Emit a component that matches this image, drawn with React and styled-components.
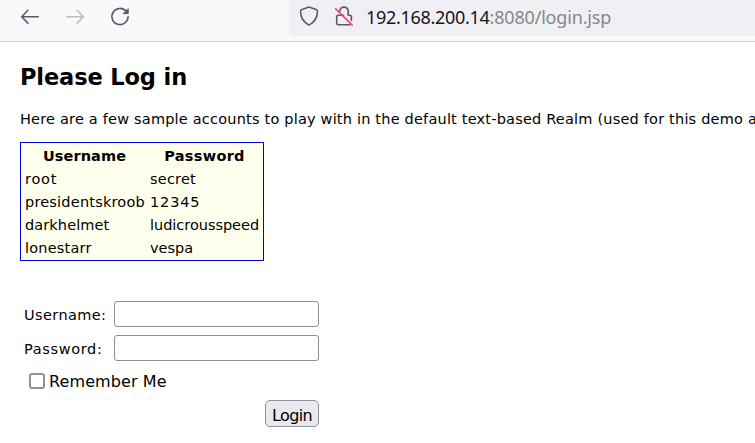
import React from "react";
import styled, { createGlobalStyle } from "styled-components";

const GlobalStyle = createGlobalStyle`
  * { box-sizing: border-box; }
  html, body { margin: 0; background: #fff; overflow: hidden; }
`;

const Page = styled.div`
  width: 755px;
  height: 443px;
  overflow: hidden;
  background: #fff;
  color: #000;
  font-family: "DejaVu Sans", Verdana, sans-serif;
`;

const Toolbar = styled.header`
  display: flex;
  height: 42px;
  background: #f9f9fb;
  border-bottom: 1px solid #ccccd0;
`;

const NavButtons = styled.nav`
  display: flex;
  flex: none;
  width: 289px;
  padding: 5px 0 0 18px;
  gap: 21px;
`;

const Icon = styled.svg`
  display: block;
  flex: none;
  width: 24px;
  height: 24px;
  fill: none;
  stroke: ${(p) => p.$color || "#5b5b66"};
  stroke-width: 1.6;
  stroke-linecap: round;
  stroke-linejoin: round;
`;

const AddressBar = styled.div`
  display: flex;
  flex: 1;
  height: 36px;
  padding: 4px 0 0 8px;
  background: #f0f0f4;
  border-radius: 0 0 0 4px;
`;

const SecurityIcons = styled.div`
  display: flex;
  gap: 11px;
  width: 69px;
`;

const Url = styled.span`
  color: #87878e;
  font: 18px/26px "Noto Sans", sans-serif;
  letter-spacing: -0.18px;
  white-space: nowrap;
`;

const Host = styled.span`
  color: #15141a;
  letter-spacing: -0.3px;
`;

const Content = styled.main`
  padding: 20px 0 0 20px;
`;

const Title = styled.h1`
  margin: 0;
  font-size: 22.5px;
  line-height: 30px;
  letter-spacing: -0.12px;
`;

const Intro = styled.p`
  margin: 16px 0 0;
  font-size: 14.5px;
  line-height: 22px;
  letter-spacing: 0.2px;
  white-space: nowrap;
`;

const Accounts = styled.table`
  width: 244px;
  height: 119px;
  margin-top: 12px;
  table-layout: fixed;
  border: 1px solid #0000d8;
  border-spacing: 2px 0;
  background: #ffffee;
  font-size: 14.5px;
  line-height: 21px;
  padding: 2px 0 0;
`;

const HeadCell = styled.th`
  width: ${(p) => p.$width};
  padding: 1px;
  letter-spacing: ${(p) => p.$spacing || "0.15px"};
`;

const Cell = styled.td`
  padding: 1px 1px 1px 2px;
  white-space: nowrap;
  letter-spacing: ${(p) => p.$spacing};
`;

const Form = styled.form`
  width: 299px;
  margin-top: 40px;
`;

const Field = styled.label`
  display: flex;
  justify-content: space-between;
  height: 26px;
  margin-bottom: 8px;
  padding-left: 4px;
  font-size: 14.5px;
  line-height: 28px;
  letter-spacing: ${(p) => p.$spacing};
`;

const TextInput = styled.input`
  width: 205px;
  height: 26px;
  margin: 0;
  background: #fff;
  border: 1px solid #8f8f9d;
  border-radius: 3px;
  outline: none;
`;

const Remember = styled.label`
  display: flex;
  align-items: center;
  gap: 4px;
  height: 24px;
  padding-left: 9px;
  font-size: 16px;
  letter-spacing: 0.1px;
`;

const Checkbox = styled.input`
  appearance: none;
  width: 16px;
  height: 16px;
  margin: 0;
  background: #fff;
  border: 2px solid #8f8f9d;
  border-radius: 3px;
`;

const LoginButton = styled.button`
  display: block;
  width: 54px;
  height: 27px;
  margin: 7px 0 0 auto;
  padding: 4px 0 0;
  border: 1px solid #8f8f9d;
  border-radius: 5px;
  background: #e9e9ed;
  color: #000;
  font: 16px/20px "DejaVu Sans", Verdana, sans-serif;
  letter-spacing: -0.6px;
`;

const accounts = [
  { user: "root", password: "secret", userSpacing: "0.8px", passwordSpacing: "0.2px" },
  { user: "presidentskroob", password: "12345", userSpacing: "0.2px", passwordSpacing: "0.85px" },
  { user: "darkhelmet", password: "ludicrousspeed", userSpacing: "0.1px", passwordSpacing: "-0.03px" },
  { user: "lonestarr", password: "vespa", userSpacing: "0.2px", passwordSpacing: "0" },
];

export default function App() {
  return (
    <Page>
      <GlobalStyle />
      <Toolbar>
        <NavButtons>
          <Icon viewBox="0 0 24 24"><path d="M20.2 11.7H3.8M9.9 5.3L3.7 11.7L9.9 18.1" /></Icon>
          <Icon viewBox="0 0 24 24" $color="#bdbdc2"><path d="M3.8 11.7H20.2M14.1 5.3L20.3 11.7L14.1 18.1" /></Icon>
          <Icon viewBox="0 0 24 24">
            <path d="M18.2 6.3A8.1 8.1 0 1 0 20.1 11.8" />
            <path d="M20.2 4V8.6H15.6Z" fill="#5b5b66" strokeWidth="1" />
          </Icon>
        </NavButtons>
        <AddressBar>
          <SecurityIcons>
            <Icon viewBox="0 0 24 24"><path d="M12 2.9L19.7 5.8C20.5 6.1 20.5 7 20.4 8.1C20.1 14.7 17.2 18.4 12 21.1C6.8 18.4 3.9 14.7 3.6 8.1C3.5 7 3.5 6.1 4.3 5.8Z" /></Icon>
            <Icon viewBox="0 0 24 24">
              <path d="M7.8 7.2C8.1 4.7 9.6 3.1 12 3.1C14.8 3.1 16.2 5.1 16.2 7.8V11.2H17.8C18.8 11.2 19.4 11.8 19.4 12.8V16.5M11.5 11.2H6.3C5.3 11.2 4.7 11.8 4.7 12.8V19.2C4.7 20.2 5.3 20.8 6.3 20.8H17.8" />
              <path d="M3.7 4.9L20.2 21.1" stroke="#ef476b" />
            </Icon>
          </SecurityIcons>
          <Url><Host>192.168.200.14</Host>:8080/login.jsp</Url>
        </AddressBar>
      </Toolbar>
      <Content>
        <Title>Please Log in</Title>
        <Intro>Here are a few sample accounts to play with in the default text-based Realm (used for this demo a</Intro>
        <Accounts>
          <thead>
            <tr><HeadCell $width="123px" $spacing="0.1px">Username</HeadCell><HeadCell $spacing="0.3px">Password</HeadCell></tr>
          </thead>
          <tbody>
            {accounts.map((a) => (
              <tr key={a.user}>
                <Cell $spacing={a.userSpacing}>{a.user}</Cell>
                <Cell $spacing={a.passwordSpacing}>{a.password}</Cell>
              </tr>
            ))}
          </tbody>
        </Accounts>
        <Form onSubmit={(e) => e.preventDefault()}>
          <Field $spacing="0.4px">Username:<TextInput type="text" /></Field>
          <Field $spacing="0.65px">Password:<TextInput type="password" /></Field>
          <Remember><Checkbox type="checkbox" />Remember Me</Remember>
          <LoginButton type="submit">Login</LoginButton>
        </Form>
      </Content>
    </Page>
  );
}
